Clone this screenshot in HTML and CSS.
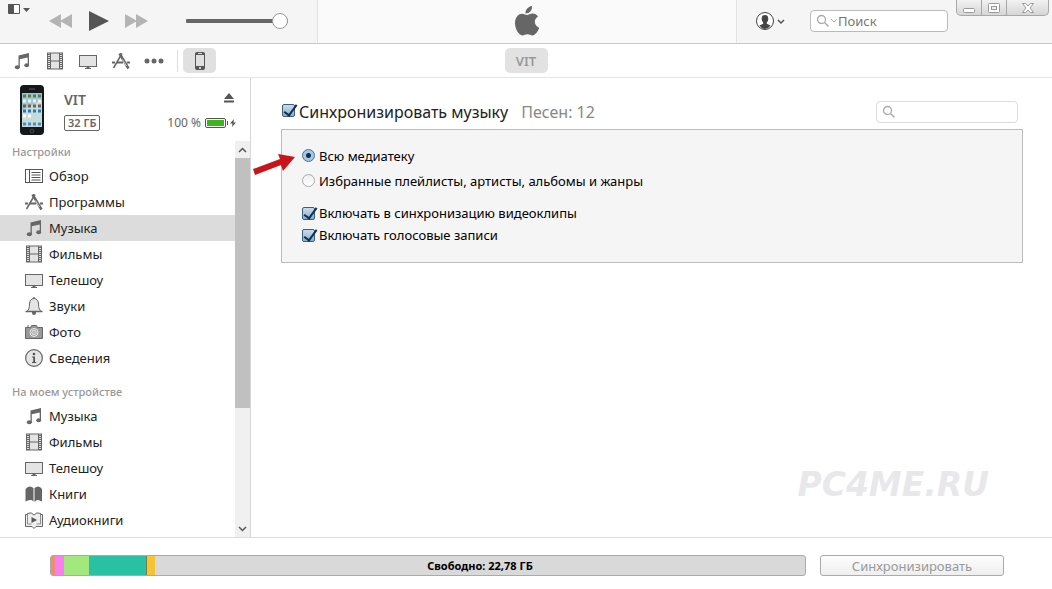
FILE: index.html
```html
<!DOCTYPE html>
<html lang="ru">
<head>
    <meta charset="UTF-8">
    <meta name="viewport" content="width=device-width, initial-scale=1.0">
    <title>VIT - Музыка</title>
    <link rel="stylesheet" href="styles.css">
</head>
<body>
    <!-- Shared icons -->
    <svg class="sprite" aria-hidden="true">
        <symbol id="i-music" viewBox="0 0 20 20">
            <path d="M6.500 4.500 17 2v12h-1.300V6.500L7.800 8.200v8.300H6.500z" fill="#666"/>
            <ellipse cx="5.300" cy="16.300" rx="2.500" ry="2" fill="#666"/>
            <ellipse cx="14.700" cy="14.300" rx="2.400" ry="2" fill="#666"/>
        </symbol>
        <symbol id="i-film" viewBox="0 0 20 20">
            <rect x="2.500" y="2" width="15" height="16" fill="#e4e4e4" stroke="#666"/>
            <path d="M5.500 2v16M14.500 2v16M5.500 10h9" stroke="#666" fill="none"/>
            <path d="M4 3v15M16 3v15" stroke="#666" stroke-width="2" stroke-dasharray="1 1"/>
        </symbol>
        <symbol id="i-tv" viewBox="0 0 20 20">
            <rect x="1.500" y="4.500" width="17" height="11" fill="#e4e4e4" stroke="#666"/>
            <path d="M7 17.500h6M8.500 16.500h3" stroke="#666"/>
        </symbol>
        <symbol id="i-apps" viewBox="0 0 20 20">
            <path d="M2.500 17 11 2.500" stroke="#666" stroke-width="1.500" fill="none"/>
            <path d="M8.500 2.500 17.500 17.500" stroke="#666" stroke-width="2.500" fill="none"/>
            <path d="m11.500 8.500 4 6.500" stroke="#fff" stroke-width=".7"/>
            <path d="M1 11.500h3M6 11.500h6M16 11.500h3" stroke="#666" stroke-width="2"/>
        </symbol>
        <symbol id="i-list" viewBox="0 0 20 20">
            <rect x="1.500" y="3.500" width="17" height="13" fill="#fff" stroke="#555"/>
            <path d="M5.500 3.500v13M7.500 6.500h9M7.500 9h9M7.500 11.500h9M7.500 14h9" stroke="#555"/>
        </symbol>
        <symbol id="i-bell" viewBox="0 0 20 20">
            <path d="M10 2.500c-3 0-4.500 2.500-4.500 5.500 0 4-1 6.500-3 7.500h15c-2-1-3-3.500-3-7.500 0-3-1.500-5.500-4.500-5.500z" fill="#e4e4e4" stroke="#666"/>
            <path d="M10 1v2M1.500 15.500h17" stroke="#666" stroke-width="1.300"/>
            <path d="M8 16h4v1a2 2 0 0 1-4 0z" fill="#666"/>
        </symbol>
        <symbol id="i-camera" viewBox="0 0 20 20">
            <path d="M1.500 5.500h5l1-2h5l1 2h5v11h-17z" fill="#999" stroke="#666"/>
            <path d="M3 4h2" stroke="#666"/>
            <circle cx="10" cy="10.500" r="4" fill="#999" stroke="#eee"/>
            <circle cx="10" cy="10.500" r="2.300" fill="#bbb" stroke="#eee" stroke-width=".8"/>
        </symbol>
        <symbol id="i-info" viewBox="0 0 20 20">
            <circle cx="10" cy="10" r="8.400" fill="#e4e4e4" stroke="#666" stroke-width="1.200"/>
            <circle cx="10" cy="6" r="1.300" fill="#555"/>
            <path d="M8 8.500h3V14h1.200v1H8v-1h1.200V9.500H8z" fill="#555"/>
        </symbol>
        <symbol id="i-book" viewBox="0 0 20 20">
            <path d="M1.500 5Q5 .5 9.500 4v13.500l-2-1.500-3 .2-3 1.300zM10.500 4Q15 .5 18 5v12.500l-3-1.300-2-.2-2.500 2z" fill="#666"/>
        </symbol>
        <symbol id="i-audiobook" viewBox="0 0 20 20">
            <path d="M10 5Q7.500 1.500 3.500 3.500v1h-2v12H8l2 2 2-2h6.500v-12h-2v-1Q12.500 1.500 10 5z" fill="#eee" stroke="#666"/>
            <path d="M3.500 4v10h4M16.500 4v10h-4" stroke="#666" fill="none" stroke-width=".7"/>
            <path d="m7.500 7 5.500 3-5.500 3z" fill="#555"/>
        </symbol>
        <symbol id="i-search" viewBox="0 0 14 14">
            <circle cx="5.500" cy="5.500" r="4" fill="none" stroke="#aaa" stroke-width="1.300"/>
            <path d="m8.500 8.500 4 4" stroke="#aaa" stroke-width="1.500"/>
        </symbol>
    </svg>

    <header class="player">
        <div class="player-left">
            <button class="menu-button" aria-label="Меню">
                <svg width="24" height="12" viewBox="0 0 24 12"><path d="M1.500 1.500h11v9h-11z" fill="#fff" stroke="#555"/><path d="M1 1h6v9H1zM16 5h7l-3.500 4z" fill="#555"/></svg>
            </button>
            <div class="transport">
                <button aria-label="Назад"><svg width="24" height="16" viewBox="0 0 24 16"><path d="M12 1v14L0 8zM23 1v14L11 8z" fill="#b4b4b4"/></svg></button>
                <button aria-label="Воспроизвести"><svg width="20" height="22" viewBox="0 0 20 22"><path d="M0 1v20l20-10z" fill="#555"/></svg></button>
                <button aria-label="Вперед"><svg width="24" height="16" viewBox="0 0 24 16"><path d="M0 1v14l12-7zM11 1v14l12-7z" fill="#b4b4b4"/></svg></button>
            </div>
            <input class="volume" type="range" min="0" max="100" value="100" aria-label="Громкость">
        </div>
        <div class="player-display">
            <svg width="26" height="32" viewBox="0 0 26 32">
                <path d="M18 1c.5 4-2.500 7.500-6.500 7.500C11 5 14 1.500 18 1z" fill="#666"/>
                <path d="M13 10c1.700 0 3-1.400 5.500-1.400 2.300 0 4.300 1.200 5.500 3-4.700 2.800-4 9.300 1.200 11.200-1 3-3.700 7.600-6.700 7.600-1.800 0-2.700-1.100-5-1.100s-3.300 1.100-5 1.100C4.800 30.400 1 24 1 18c0-6 3.600-9.300 7.200-9.300C10.400 8.700 11.700 10 13 10z" fill="#666"/>
            </svg>
        </div>
        <div class="player-right">
            <button class="account" aria-label="Учетная запись">
                <svg width="30" height="20" viewBox="0 0 30 20">
                    <circle cx="10" cy="10" r="8.500" fill="#fff" stroke="#444"/>
                    <path d="M10 4c2.300 0 3.300 1.500 3.300 3.700 0 1.500-.7 3-1.500 3.800v1.300l3.700 1.600A8 8 0 0 1 10 18a8 8 0 0 1-5.500-3.600l3.700-1.600v-1.300C7.400 10.700 6.700 9.200 6.700 7.700 6.700 5.500 7.700 4 10 4z" fill="#444"/>
                    <path d="m23 9 3 3 3-3" fill="none" stroke="#555" stroke-width="1.500"/>
                </svg>
            </button>
            <div class="search-box">
                <svg width="14" height="14"><use href="#i-search"/></svg>
                <svg width="8" height="6" viewBox="0 0 8 6"><path d="m1 1 3 3 3-3" fill="none" stroke="#aaa"/></svg>
                <input type="text" placeholder="Поиск" aria-label="Поиск">
            </div>
            <div class="window-buttons">
                <button aria-label="Свернуть"><svg width="14" height="12" viewBox="0 0 14 12"><rect x="1.500" y="6.500" width="11" height="4" rx="1" fill="#fff" stroke="#999"/></svg></button>
                <button aria-label="Развернуть"><svg width="14" height="12" viewBox="0 0 14 12"><rect x="1.500" y="1.500" width="11" height="9" rx="1" fill="#fff" stroke="#999"/><rect x="4.500" y="4.500" width="5" height="3" fill="#eee" stroke="#999"/></svg></button>
                <button class="close" aria-label="Закрыть"><svg width="14" height="12" viewBox="0 0 14 12"><path d="M1.500 1.500h3L7 4l2.500-2.500h3L9 6l3.500 4.500h-3L7 8l-2.500 2.500h-3L5 6z" fill="#fff" stroke="#999"/></svg></button>
            </div>
        </div>
    </header>

    <nav class="toolbar">
        <div class="libraries">
            <button aria-label="Музыка"><svg width="20" height="20"><use href="#i-music"/></svg></button>
            <button aria-label="Фильмы"><svg width="20" height="20"><use href="#i-film"/></svg></button>
            <button aria-label="Телешоу"><svg width="20" height="20"><use href="#i-tv"/></svg></button>
            <button aria-label="Программы"><svg width="20" height="20"><use href="#i-apps"/></svg></button>
            <button aria-label="Еще"><svg width="20" height="20" viewBox="0 0 20 20"><g fill="#666"><circle cx="3" cy="10" r="2.500"/><circle cx="10" cy="10" r="2.500"/><circle cx="17" cy="10" r="2.500"/></g></svg></button>
            <span class="separator"></span>
            <button class="active" aria-label="Устройство"><svg width="20" height="20" viewBox="0 0 20 20"><rect x="5" y="1" width="10" height="18" rx="2" fill="#555"/><path d="M6 4h8v11H6z" fill="#e0e0e0"/><path d="M8 2.500h4" stroke="#ddd"/><circle cx="10" cy="17" r="1" fill="#fff"/></svg></button>
        </div>
        <button class="device-tab">VIT</button>
    </nav>

    <div class="workspace">
        <aside class="sidebar">
            <div class="device">
                <svg class="phone" width="24" height="50" viewBox="0 0 24 50">
                    <rect width="24" height="50" rx="4" fill="#151719"/>
                    <path d="M2 8h20v34H2z" fill="#9fc6cf"/>
                    <path d="M2 25 22 15v27H2z" fill="#c6dcda"/>
                    <path d="M9 4h6" stroke="#555"/>
                    <g stroke-width="3" stroke-dasharray="3 2" fill="none">
                        <path d="M3 11h18" stroke="#547e52"/><path d="M3 16h18" stroke="#eee"/>
                        <path d="M3 21h18" stroke="#745d65"/><path d="M3 26h18" stroke="#297bb0"/>
                        <path d="M3 31h9" stroke="#fff"/><path d="M3 39h18" stroke="#478fc8"/>
                    </g>
                    <circle cx="12" cy="46" r="2" fill="#222" stroke="#444"/>
                </svg>
                <div class="device-info">
                    <div class="device-row">
                        <strong>VIT</strong>
                        <button class="eject" aria-label="Извлечь"><svg width="12" height="12" viewBox="0 0 12 12"><path d="M6 0l5 6H1zM1 7.500h10v2H1z" fill="#555"/></svg></button>
                    </div>
                    <div class="device-row">
                        <span class="capacity">32 ГБ</span>
                        <span class="battery">100 %
                            <svg width="32" height="12" viewBox="0 0 32 12"><rect x=".5" y="1.500" width="20" height="9" rx="1.500" fill="#fff" stroke="#555"/><path d="M2 3h17v6H2z" fill="#3db51d"/><path d="M22.500 4v4" stroke="#555"/><path d="m29 2-4 4.500h2.500L27 10l4-4.500h-2.500z" fill="#555"/></svg>
                        </span>
                    </div>
                </div>
            </div>
            <div class="sidebar-body">
                <nav class="side-nav">
                    <h2>Настройки</h2>
                    <a href="#"><svg width="20" height="20"><use href="#i-list"/></svg>Обзор</a>
                    <a href="#"><svg width="20" height="20"><use href="#i-apps"/></svg>Программы</a>
                    <a href="#" class="selected"><svg width="20" height="20"><use href="#i-music"/></svg>Музыка</a>
                    <a href="#"><svg width="20" height="20"><use href="#i-film"/></svg>Фильмы</a>
                    <a href="#"><svg width="20" height="20"><use href="#i-tv"/></svg>Телешоу</a>
                    <a href="#"><svg width="20" height="20"><use href="#i-bell"/></svg>Звуки</a>
                    <a href="#"><svg width="20" height="20"><use href="#i-camera"/></svg>Фото</a>
                    <a href="#"><svg width="20" height="20"><use href="#i-info"/></svg>Сведения</a>
                    <h2 class="second">На моем устройстве</h2>
                    <a href="#"><svg width="20" height="20"><use href="#i-music"/></svg>Музыка</a>
                    <a href="#"><svg width="20" height="20"><use href="#i-film"/></svg>Фильмы</a>
                    <a href="#"><svg width="20" height="20"><use href="#i-tv"/></svg>Телешоу</a>
                    <a href="#"><svg width="20" height="20"><use href="#i-book"/></svg>Книги</a>
                    <a href="#"><svg width="20" height="20"><use href="#i-audiobook"/></svg>Аудиокниги</a>
                </nav>
                <div class="scrollbar">
                    <button aria-label="Вверх"><svg width="9" height="6" viewBox="0 0 9 6"><path d="m1 5 3.500-3.500L8 5" fill="none" stroke="#555" stroke-width="1.500"/></svg></button>
                    <div class="track"><div class="thumb"></div></div>
                    <button aria-label="Вниз"><svg width="9" height="6" viewBox="0 0 9 6"><path d="m1 1 3.500 3.500L8 1" fill="none" stroke="#555" stroke-width="1.500"/></svg></button>
                </div>
            </div>
        </aside>

        <main class="content">
            <div class="content-head">
                <input type="checkbox" id="syncMusic" checked>
                <label for="syncMusic">Синхронизировать музыку</label>
                <span class="song-count">Песен: 12</span>
                <div class="search-box local">
                    <svg width="14" height="14"><use href="#i-search"/></svg>
                    <input type="text" aria-label="Поиск на устройстве">
                </div>
            </div>
            <div class="options">
                <div class="option-group radios">
                    <label><input type="radio" name="scope" checked>Всю медиатеку</label>
                    <label><input type="radio" name="scope">Избранные плейлисты, артисты, альбомы и жанры</label>
                </div>
                <div class="option-group">
                    <label><input type="checkbox" checked>Включать в синхронизацию видеоклипы</label>
                    <label><input type="checkbox" checked>Включать голосовые записи</label>
                </div>
                <svg class="pointer" width="44" height="24" viewBox="0 0 44 24"><path d="M1 16 28 6 26 1l17 3-12 14-2-6L3 22z" fill="#c8141a"/></svg>
            </div>
            <div class="watermark">PC4ME.RU</div>
        </main>
    </div>

    <footer class="status">
        <div class="storage">
            <span class="seg other"></span>
            <span class="seg audio"></span>
            <span class="seg photos"></span>
            <span class="seg apps"></span>
            <span class="seg docs"></span>
            <span class="free">Свободно: 22,78 ГБ</span>
        </div>
        <button class="sync-button" disabled>Синхронизировать</button>
    </footer>
</body>
</html>
```
FILE: styles.css
```css
* {
    margin: 0;
    padding: 0;
    box-sizing: border-box;
}

body {
    display: flex;
    flex-direction: column;
    min-height: 100vh;
    font-family: 'Noto Sans', 'Open Sans', sans-serif;
    font-size: 13px;
    line-height: 18px;
    color: #222;
    background: #fff;
}

button {
    display: flex;
    align-items: center;
    justify-content: center;
    border: none;
    background: none;
    font-family: inherit;
}

svg {
    display: block;
    flex: none;
}

.sprite {
    position: absolute;
    width: 0;
    height: 0;
}

/* Player */
.player {
    display: grid;
    grid-template-columns: 317px 1fr 315px;
    height: 44px;
    background: #f5f5f5;
    border-bottom: 1px solid #c8c8c8;
}

.player-left {
    display: flex;
    align-items: center;
    padding-bottom: 2px;
}

.menu-button {
    align-self: flex-start;
    margin: 3px 0 0 7px;
}

.transport {
    display: flex;
    align-items: center;
    gap: 16px;
    margin-left: 18px;
}

.volume {
    width: 102px;
    height: 16px;
    margin-left: 37px;
    appearance: none;
    background: linear-gradient(#666, #666) center / 100% 4px no-repeat;
    border-radius: 8px;
}

.volume::-webkit-slider-thumb {
    appearance: none;
    width: 16px;
    height: 16px;
    border: 1px solid #999;
    border-radius: 50%;
    background: #fff;
}

.player-display {
    display: flex;
    align-items: center;
    justify-content: center;
    padding-bottom: 2px;
    background: #fafafa;
    border-left: 1px solid #e2e2e2;
    border-right: 1px solid #e2e2e2;
}

.player-right {
    display: flex;
    align-items: center;
    padding: 0 3px 2px 18px;
}

.search-box {
    display: flex;
    align-items: center;
    width: 138px;
    height: 22px;
    margin-left: 25px;
    padding: 0 5px;
    border: 1px solid #bbb;
    border-radius: 4px;
    background: #fff;
}

.search-box input {
    flex: 1;
    min-width: 0;
    border: none;
    outline: none;
    background: none;
    font: inherit;
}

.search-box input::placeholder {
    color: #777;
}

.window-buttons {
    display: flex;
    align-self: flex-start;
    margin-left: auto;
    border: 1px solid #a8a8a8;
    border-top: none;
    border-radius: 0 0 5px 5px;
    background: linear-gradient(#f2f2f2, #d6d6d6);
}

.window-buttons button {
    width: 25px;
    height: 15px;
    border-right: 1px solid #a8a8a8;
}

.window-buttons .close {
    width: 41px;
    border-right: none;
}

/* Toolbar */
.toolbar {
    display: grid;
    grid-template-columns: 1fr auto 1fr;
    align-items: center;
    height: 34px;
    border-bottom: 1px solid #e4e4e4;
}

.libraries {
    display: flex;
    align-items: center;
    padding-left: 5px;
}

.libraries button {
    width: 33px;
    height: 25px;
    border-radius: 5px;
}

.libraries .active {
    background: #e0e0e0;
}

.separator {
    width: 1px;
    height: 22px;
    margin: 0 5px 0 7px;
    background: #ddd;
}

.device-tab {
    width: 43px;
    height: 25px;
    border-radius: 5px;
    background: #e2e2e2;
    color: #999;
    font-size: 13px;
    font-weight: 600;
}

/* Sidebar */
.workspace {
    display: flex;
    flex: 1;
}

.sidebar {
    display: flex;
    flex-direction: column;
    width: 251px;
    border-right: 1px solid #d8d8d8;
}

.device {
    display: flex;
    gap: 20px;
    height: 63px;
    padding: 7px 13px 0 20px;
}

.device-info {
    flex: 1;
    padding-top: 3px;
}

.device-row {
    display: flex;
    align-items: center;
    justify-content: space-between;
    height: 23px;
    color: #666;
}

.device-row strong {
    font-size: 14px;
    font-weight: 600;
}

.capacity {
    padding: 0 3px;
    border: 1px solid #666;
    border-radius: 2px;
    font-size: 11px;
    font-weight: 600;
    line-height: 14px;
}

.eject {
    margin: 0 2px 2px 0;
}

.battery {
    display: flex;
    align-items: center;
    gap: 4px;
    font-size: 12px;
}

.sidebar-body {
    display: flex;
    flex: 1;
}

.side-nav {
    flex: 1;
}

.side-nav h2 {
    height: 22px;
    padding-left: 12px;
    color: #999;
    font-size: 11px;
    font-weight: 500;
    line-height: 22px;
}

.side-nav .second {
    height: 32px;
    line-height: 42px;
}

.side-nav a {
    display: flex;
    align-items: center;
    gap: 5px;
    height: 26px;
    padding-left: 24px;
    color: #222;
    text-decoration: none;
}

.side-nav .selected {
    background: #dcdcdc;
}

.scrollbar {
    display: flex;
    flex-direction: column;
    width: 15px;
    background: #f0f0f0;
}

.scrollbar button {
    height: 17px;
}

.track {
    flex: 1;
}

.thumb {
    height: 69%;
    background: #c0c0c0;
}

/* Content */
.content {
    display: flex;
    flex: 1;
    flex-direction: column;
    padding: 22px 29px 35px 30px;
}

.content-head {
    display: flex;
    align-items: center;
    height: 24px;
    margin-bottom: 5px;
    font-size: 16px;
}

.content-head label {
    margin-left: 4px;
}

.song-count {
    margin-left: 13px;
    color: #888;
}

.search-box.local {
    width: 142px;
    margin: 0 5px 0 auto;
    border-color: #dcdce0;
}

input[type='checkbox'],
input[type='radio'] {
    flex: none;
    width: 13px;
    height: 13px;
    appearance: none;
    border: 1px solid #3e5f7c;
    background: linear-gradient(#c8dcec, #88b0d0);
}

input[type='checkbox'] {
    position: relative;
    border-radius: 2px;
}

/* Check mark sticks out over the top right corner of the box */
input[type='checkbox']:checked::after {
    content: '';
    position: absolute;
    top: -3px;
    left: 4px;
    width: 5px;
    height: 12px;
    border: solid #14304e;
    border-width: 0 2px 2px 0;
    transform: rotate(36deg);
}

input[type='radio'] {
    border-color: #aaa;
    border-radius: 50%;
    background: linear-gradient(#eee, #fff);
}

input[type='radio']:checked {
    border-color: #4f6f8c;
    background: radial-gradient(circle, #12304c 2px, #a5c9e5 3px);
}

.content-head input[type='checkbox'] {
    margin: 0 0 4px 1px;
}

.options {
    position: relative;
    padding: 13px 20px 16px;
    border: 1px solid #bcbcbc;
    background: #f5f5f6;
    color: #000;
}

.option-group label {
    display: flex;
    align-items: center;
    gap: 4px;
    height: 22px;
}

.radios {
    margin-bottom: 9px;
}

.radios label {
    height: 25px;
}

.pointer {
    position: absolute;
    top: 23px;
    left: -30px;
}

.watermark {
    margin: auto 34px 0 auto;
    color: #e8e8eb;
    font-family: 'DejaVu Sans', sans-serif;
    font-size: 33px;
    font-style: italic;
    font-weight: bold;
    line-height: 34px;
}

/* Status bar */
.status {
    display: flex;
    align-items: center;
    gap: 14px;
    height: 52px;
    padding: 4px 48px 0 50px;
    border-top: 1px solid #ddd;
}

.storage {
    display: flex;
    flex: 1;
    height: 21px;
    border: 1px solid #aaa;
    border-radius: 3px;
    background: #d9d9d9;
    overflow: hidden;
}

.other {
    width: 4px;
    background: #f08c72;
}

.audio {
    width: 9px;
    background: #f97ff0;
}

.photos {
    width: 25px;
    background: #a2e87e;
}

.apps {
    width: 57px;
    background: #28c1a3;
}

.docs {
    width: 9px;
    background: #f5c432;
    border-left: 1px solid #7a7a50;
}

.free {
    flex: 1;
    color: #000;
    font-size: 11px;
    font-weight: bold;
    line-height: 20px;
    text-align: center;
}

.sync-button {
    width: 184px;
    height: 21px;
    border: 1px solid #aaa;
    border-radius: 3px;
    background: linear-gradient(#fdfdfd, #eee);
    color: #999;
    font-size: 13px;
}
```
